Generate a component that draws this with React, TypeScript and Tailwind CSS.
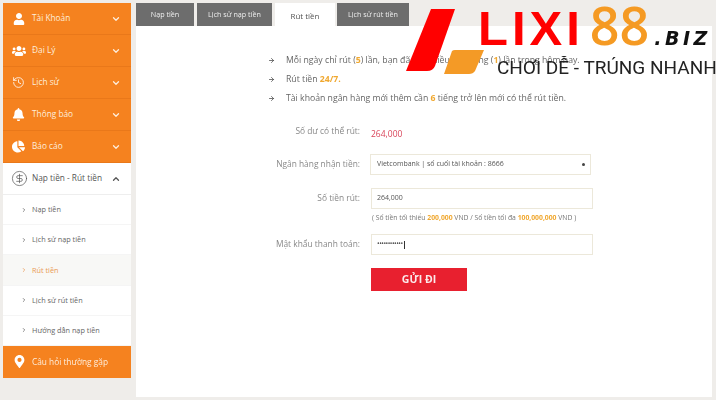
import type { ReactNode } from "react";
import { ChevronDown, ChevronUp, ChevronRight, ArrowRight, History, CircleDollarSign } from "lucide-react";
import { FaUser, FaUsers, FaBell, FaChartPie, FaMapMarkerAlt } from "react-icons/fa";

const topMenu = [
  { name: "Tài Khoản", icon: <FaUser size={12} /> },
  { name: "Đại Lý", icon: <FaUsers size={14} /> },
  { name: "Lịch sử", icon: <History size={13} strokeWidth={1.5} /> },
  { name: "Thông báo", icon: <FaBell size={13} /> },
  { name: "Báo cáo", icon: <FaChartPie size={13} /> },
];

const subMenu = [
  { name: "Nạp tiền" },
  { name: "Lịch sử nạp tiền" },
  { name: "Rút tiền", active: true },
  { name: "Lịch sử rút tiền" },
  { name: "Hướng dẫn nạp tiền" },
];

const Sidebar = () => (
  <nav className="w-[128px] shrink-0 text-[8.3px]">
    {topMenu.map((item) => (
      <div key={item.name} className="flex h-[32px] items-center border-b border-[#e9781a] bg-[#f5821f] pl-[8px] pr-[10px] text-[#fdeedd]">
        <span className="flex w-[15px] justify-center text-white">{item.icon}</span>
        <span className="ml-[6px] flex-1">{item.name}</span>
        <ChevronDown size={10} strokeWidth={3} />
      </div>
    ))}
    <div className="flex h-[32px] items-center border-b border-[#eeeeee] bg-white pl-[8px] pr-[10px] text-[#555555]">
      <CircleDollarSign size={17} strokeWidth={1} />
      <span className="ml-[4px] flex-1">Nạp tiền - Rút tiền</span>
      <ChevronUp size={10} strokeWidth={3} />
    </div>
    {subMenu.map((item) => (
      <div
        key={item.name}
        className={`flex h-[30.2px] items-center border-b border-[#f5f5f5] pl-[18px] text-[7.3px] ${item.active ? "bg-[#f8f8f6] text-[#ea9a55]" : "bg-white text-[#666666]"}`}
      >
        <ChevronRight size={6} strokeWidth={3} />
        <span className="ml-[5px]">{item.name}</span>
      </div>
    ))}
    <div className="flex h-[32px] items-center bg-[#f5821f] pl-[9px] text-[#fdeedd]">
      <span className="flex w-[14px] justify-center text-white"><FaMapMarkerAlt size={13} /></span>
      <span className="ml-[6px]">Câu hỏi thường gặp</span>
    </div>
  </nav>
);

const FormRow = ({ label, children }: { label: string; children: ReactNode }) => (
  <div className="flex items-center">
    <div className="w-[95px] shrink-0 text-right text-[8.4px] text-[#888888]">{label}</div>
    <div className="ml-[11px]">{children}</div>
  </div>
);

const Logo = () => (
  <div className="absolute left-[405px] top-[8px] h-[70px] w-[311px]">
    <svg width="80" height="70" viewBox="0 0 80 70" className="absolute left-0 top-0">
      <path d="M26 1 H50 L30 58 Q28 63 22 63 H1 Z" fill="#ff0000" />
      <path d="M47 43 Q48 42 50 42 H79 L70 63 Q68 66 64 66 H39 Z" fill="#f49a26" />
    </svg>
    <div className="absolute left-[73px] top-[-5px] flex h-[44px] items-baseline font-['Liberation_Sans',sans-serif] text-[49px] leading-[44px]">
      <span className="font-bold tracking-[4px] text-[#ff0000]">LIXI</span>
      <span className="ml-[6px] font-['Open_Sans',sans-serif] text-[52px] font-semibold text-[#f59a23]">88</span>
      <span className="ml-[5px] font-['DejaVu_Sans',sans-serif] text-[19px] font-bold italic tracking-[3.5px] text-[#111111]">.BIZ</span>
    </div>
    <div className="absolute left-[92px] top-[50px] whitespace-nowrap font-['Roboto',sans-serif] text-[19px] leading-[20px] text-[#222222]">
      CHƠI DỄ - TRÚNG NHANH
    </div>
  </div>
);

export default function App() {
  return (
    <div className="relative h-[400px] w-[716px] overflow-hidden bg-[#efedea] font-['Open_Sans',sans-serif]">
      <div className="flex gap-[5px] pl-[3px] pt-[3px] blur-[0.4px]">
        <Sidebar />
        <main className="flex h-[394px] flex-1 flex-col pr-[4px]">
          <div className="flex h-[23px] text-[7.2px]">
            <div className="flex w-[58px] items-center justify-center bg-[#6d6d6d] text-[#eeeeee]">Nạp tiền</div>
            <div className="ml-[3px] flex w-[75px] items-center justify-center bg-[#6d6d6d] text-[#eeeeee]">Lịch sử nạp tiền</div>
            <div className="ml-[3px] flex h-[26px] w-[60px] items-center justify-center bg-white text-[8px] text-[#555555]">Rút tiền</div>
            <div className="ml-[2px] flex w-[72px] items-center justify-center bg-[#6d6d6d] text-[#eeeeee]">Lịch sử rút tiền</div>
          </div>
          <div className="flex-1 bg-white pl-[132px] pt-[29px]">
            <ul className="flex flex-col gap-[9px] text-[8.7px] leading-[10px] text-[#666666]">
              <li className="flex items-center">
                <ArrowRight size={7} strokeWidth={2.5} className="mr-[11px] text-[#444444]" />
                <span>
                  Mỗi ngày chỉ rút (<b className="text-[#f0a830]">5</b>) lần, bạn đã rút nhiều lần trong (<b className="text-[#f0a830]">1</b>) lần trong hôm nay.
                </span>
              </li>
              <li className="flex items-center">
                <ArrowRight size={7} strokeWidth={2.5} className="mr-[11px] text-[#444444]" />
                <span>Rút tiền <b className="text-[#f0a830]">24/7.</b></span>
              </li>
              <li className="flex items-center">
                <ArrowRight size={7} strokeWidth={2.5} className="mr-[11px] text-[#444444]" />
                <span>
                  Tài khoản ngân hàng mới thêm cần <b className="text-[#f0a830]">6</b> tiếng trở lên mới có thể rút tiền.
                </span>
              </li>
            </ul>
            <div className="ml-[-132px] mt-[16px] flex flex-col pl-[129px]">
              <FormRow label="Số dư có thể rút:">
                <span className="text-[8.5px] text-[#d9455a]">264,000</span>
              </FormRow>
              <div className="mt-[11px]">
                <FormRow label="Ngân hàng nhận tiền:">
                  <div className="ml-[-1px] flex h-[21px] w-[221px] items-center justify-between border border-[#ece8da] pl-[6px] pr-[5px] text-[7px] text-[#555555]">
                    <span>Vietcombank | số cuối tài khoản :  8666</span>
                    <span className="h-[3px] w-[3px] rounded-full bg-[#444444]" />
                  </div>
                </FormRow>
              </div>
              <div className="mt-[13px]">
                <FormRow label="Số tiền rút:">
                  <div className="flex h-[21px] w-[222px] items-center border border-[#ece8da] pl-[5px] text-[7px] text-[#555555]">264,000</div>
                </FormRow>
              </div>
              <div className="ml-[107px] mt-[2px] text-[6.8px] leading-[14px] text-[#777777]">
                ( Số tiền tối thiểu <b className="text-[#f0a830]">200,000</b> VND / Số tiền tối đa <b className="text-[#f0a830]">100,000,000</b> VND )
              </div>
              <div className="mt-[9px]">
                <FormRow label="Mật khẩu thanh toán:">
                  <div className="flex h-[21px] w-[222px] items-center border border-[#ece8da] pl-[5px] text-[7px] tracking-[-0.5px] text-[#555555]">
                    ••••••••••••<span className="ml-[1px] h-[8px] w-px bg-[#333333]" />
                  </div>
                </FormRow>
              </div>
              <button className="ml-[106px] mt-[13px] h-[23px] w-[96px] bg-[#e8202f] text-[10.5px] font-bold text-[#fbe9ea]">GỬI ĐI</button>
            </div>
          </div>
        </main>
      </div>
      <Logo />
    </div>
  );
}
